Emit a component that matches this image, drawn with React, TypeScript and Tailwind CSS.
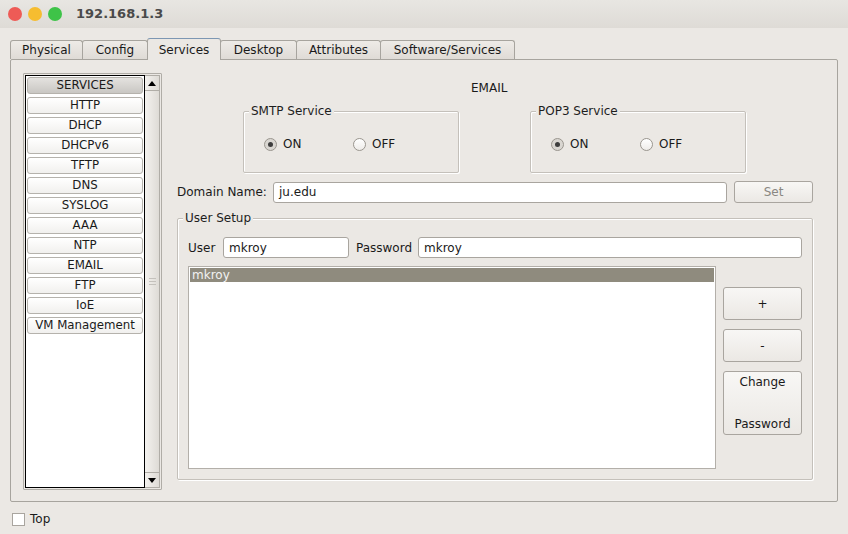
import React from 'react';

const tabs = [
  { label: 'Physical', w: 'w-[73px]' },
  { label: 'Config', w: 'w-[66px]' },
  { label: 'Services', w: 'w-[74px]' },
  { label: 'Desktop', w: 'w-[77px]' },
  { label: 'Attributes', w: 'w-[85px]' },
  { label: 'Software/Services', w: 'w-[135px]' },
];

const services = [
  'SERVICES', 'HTTP', 'DHCP', 'DHCPv6', 'TFTP', 'DNS', 'SYSLOG',
  'AAA', 'NTP', 'EMAIL', 'FTP', 'IoE', 'VM Management',
];

function Radio({ checked }: { checked?: boolean }) {
  return (
    <span
      className={`flex h-[13px] w-[13px] items-center justify-center rounded-full border border-[#9a968f] ${
        checked ? 'bg-[#d9d6d1]' : 'bg-gradient-to-b from-white to-[#eeece9]'
      }`}
    >
      {checked && <span className="h-[5px] w-[5px] rounded-full bg-[#3d3d3d]" />}
    </span>
  );
}

function GroupBox({ title, className, children }: { title: string; className: string; children?: React.ReactNode }) {
  return (
    <div className={`relative rounded-[2px] border border-[#c4c0ba] shadow-[inset_1px_1px_0_#fff,1px_1px_0_#fff] ${className}`}>
      <span className="absolute -top-[9px] left-[5px] bg-[#ebe8e4] px-[2px] leading-[16px] text-[#1d1d1d]">
        {title}
      </span>
      {children}
    </div>
  );
}

function ServiceToggle({ title, className }: { title: string; className: string }) {
  return (
    <GroupBox title={title} className={`h-[62px] w-[216px] ${className}`}>
      <div className="flex items-center pl-[20px] pt-[23px]">
        <div className="flex w-[89px] items-center gap-[6px]">
          <Radio checked />
          <span>ON</span>
        </div>
        <div className="flex items-center gap-[6px]">
          <Radio />
          <span>OFF</span>
        </div>
      </div>
    </GroupBox>
  );
}

const btnBase =
  'flex rounded-[3px] border border-[#a9a59f] bg-gradient-to-b from-[#f8f7f5] to-[#ebe8e4]';

function Btn({ children, className }: { children: React.ReactNode; className: string }) {
  return <div className={`${btnBase} items-center justify-center ${className}`}>{children}</div>;
}

export default function App() {
  return (
    <div className="h-[534px] w-[848px] overflow-hidden bg-[#ebe8e4] font-['DejaVu_Sans',sans-serif] text-[12px] text-[#1a1a1a]">
      {/* Title bar */}
      <div className="flex h-[28px] items-center bg-gradient-to-b from-[#e8e6e2] to-[#dedbd6] pl-[8px]">
        <span className="h-[14px] w-[14px] rounded-full bg-[#ee5b56]" />
        <span className="ml-[6px] h-[14px] w-[14px] rounded-full bg-[#f6bd30]" />
        <span className="ml-[6px] h-[14px] w-[14px] rounded-full bg-[#3ec348]" />
        <span className="ml-[14px] text-[13px] font-bold text-[#4a4a4a]">192.168.1.3</span>
      </div>

      {/* Tabs */}
      <div className="mt-[11px] flex h-[20px] items-end pl-[11px]">
        {tabs.map((t) => {
          const sel = t.label === 'Services';
          return (
            <div
              key={t.label}
              className={`-ml-px flex items-center justify-center rounded-t-[3px] border border-b-0 ${t.w} ${
                sel
                  ? 'relative z-10 -mb-px h-[22px] border-[#a7a49e] border-t-[#7d97b3] bg-[#ebe8e4]'
                  : 'h-[19px] border-[#a7a49e] bg-gradient-to-b from-[#eeebe7] to-[#dfdbd6]'
              }`}
            >
              {t.label}
            </div>
          );
        })}
      </div>

      {/* Panel */}
      <div className="mx-[10px] flex h-[443px] items-start rounded-[2px] border border-[#a7a49e] pl-[12px] pt-[13px]">
        {/* Left list */}
        <div className="flex h-[417px] w-[139px] rounded-[1px] border border-[#b0ada7] p-px">
          <div className="flex h-full w-[121px] flex-col gap-[3px] border border-black bg-white p-px">
            {services.map((s) => (
              <div
                key={s}
                className={`flex h-[17px] items-center justify-center rounded-[3px] border border-[#b5b2ac] text-[11.8px] ${
                  s === 'SERVICES'
                    ? 'bg-gradient-to-b from-[#e4e2df] to-[#c9c7c3]'
                    : 'bg-gradient-to-b from-white to-[#f1f0ee]'
                }`}
              >
                {s}
              </div>
            ))}
          </div>
          <div className="flex h-full w-[15px] flex-col border border-l-0 border-[#b0ada7] bg-gradient-to-r from-[#f4f2ef] to-[#dedbd6]">
            <div className="flex h-[15px] items-center justify-center border-b border-[#b0ada7]">
              <svg width="8" height="5" viewBox="0 0 8 5">
                <path d="M0 5 L4 0 L8 5 Z" fill="#000" />
              </svg>
            </div>
            <div className="flex flex-1 flex-col items-center justify-center gap-[2px]">
              <span className="h-px w-[7px] bg-[#c4c1bc]" />
              <span className="h-px w-[7px] bg-[#c4c1bc]" />
              <span className="h-px w-[7px] bg-[#c4c1bc]" />
            </div>
            <div className="flex h-[15px] items-center justify-center border-t border-[#b0ada7]">
              <svg width="8" height="5" viewBox="0 0 8 5">
                <path d="M0 0 L8 0 L4 5 Z" fill="#000" />
              </svg>
            </div>
          </div>
        </div>

        {/* Right side */}
        <div className="ml-[15px] flex w-[636px] flex-col">
          <div className="mt-[8px] h-[14px] pl-[294px] leading-[14px]">EMAIL</div>

          <div className="mt-[16px] flex">
            <ServiceToggle title="SMTP Service" className="ml-[66px]" />
            <ServiceToggle title="POP3 Service" className="ml-[71px]" />
          </div>

          <div className="mt-[8px] flex h-[22px] items-center">
            <span className="w-[96px]">Domain Name:</span>
            <div className="flex h-[21px] w-[454px] items-center rounded-[3px] border border-[#a9a59f] bg-white pl-[5px]">
              ju.edu
            </div>
            <Btn className="ml-[7px] h-[22px] w-[79px] text-[#8a8782]">Set</Btn>
          </div>

          <GroupBox title="User Setup" className="mt-[15px] h-[262px] w-[636px]">
            <div className="flex flex-col pl-[10px] pt-[18px]">
              <div className="flex h-[21px] items-center">
                <span className="w-[35px]">User</span>
                <div className="flex h-[21px] w-[126px] items-center rounded-[3px] border border-[#a9a59f] bg-white pl-[5px]">
                  mkroy
                </div>
                <span className="ml-[7px] w-[62px]">Password</span>
                <div className="flex h-[21px] w-[384px] items-center rounded-[3px] border border-[#a9a59f] bg-white pl-[5px]">
                  mkroy
                </div>
              </div>
              <div className="mt-[8px] flex items-start">
                <div className="h-[203px] w-[528px] border border-[#b3afa9] bg-white p-px">
                  <div className="flex h-[14px] items-center bg-[#8f8b7e] pl-[2px] text-[#f2f2f2]">mkroy</div>
                </div>
                <div className="ml-[7px] mt-[21px] flex flex-col gap-[9px]">
                  <Btn className="h-[33px] w-[79px]">+</Btn>
                  <Btn className="h-[33px] w-[79px]">-</Btn>
                  <div className={`${btnBase} h-[64px] w-[79px] flex-col items-center justify-between pb-[2px] pt-[2px] leading-[16px]`}>
                    <span>Change</span>
                    <span>Password</span>
                  </div>
                </div>
              </div>
            </div>
          </GroupBox>
        </div>
      </div>

      {/* Bottom */}
      <div className="mt-[8px] flex items-center pl-[12px]">
        <span className="h-[13px] w-[13px] border border-[#a9a59f] bg-white" />
        <span className="ml-[5px]">Top</span>
      </div>
    </div>
  );
}
